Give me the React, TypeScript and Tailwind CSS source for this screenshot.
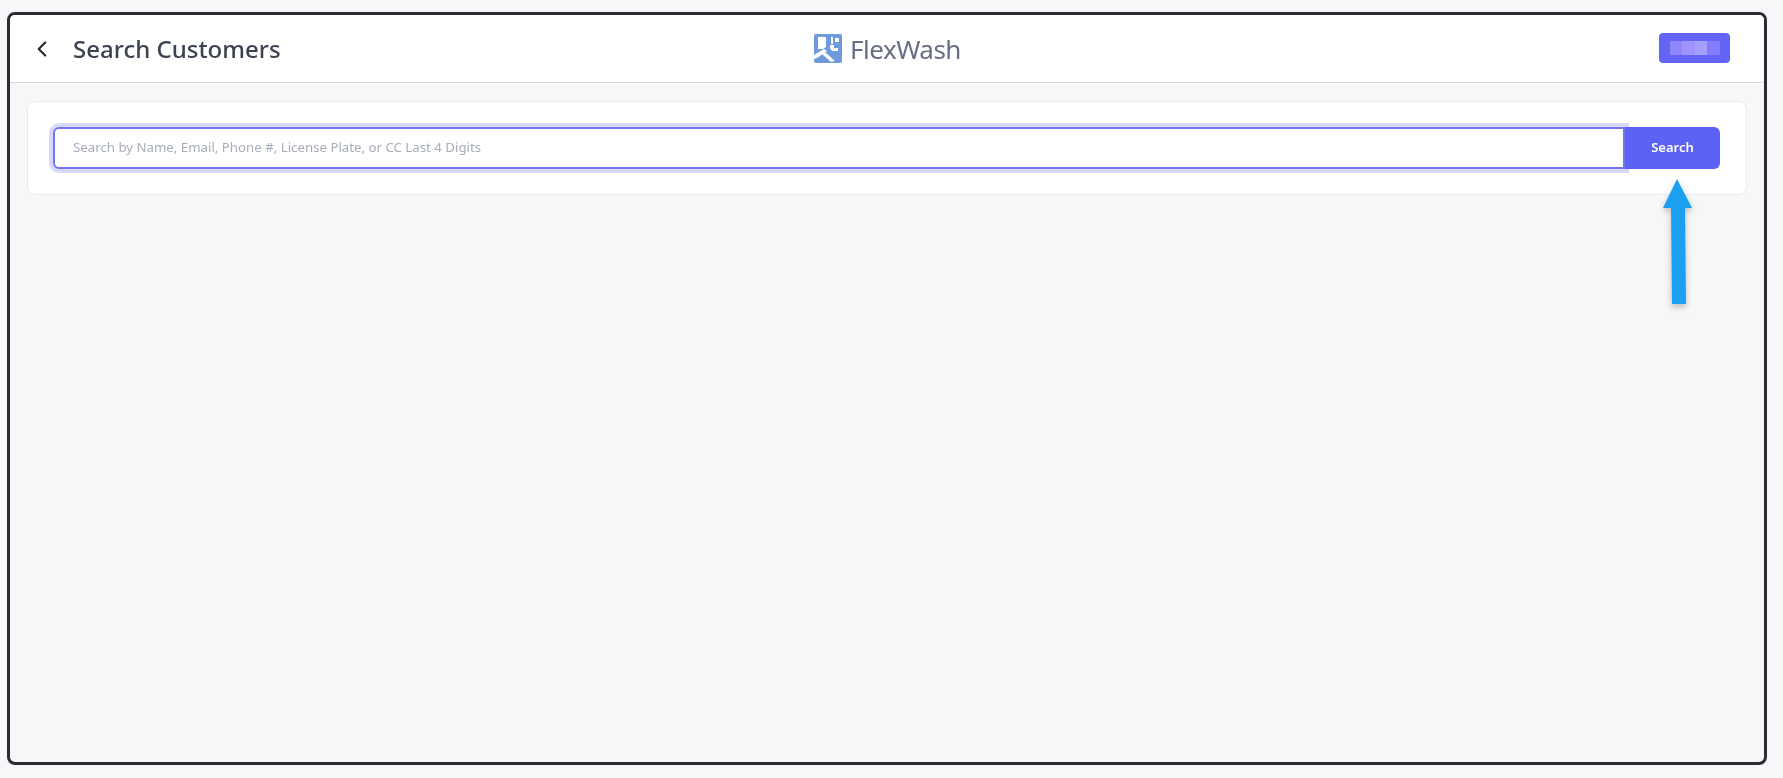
import { ChevronLeft } from 'lucide-react'

function Logo() {
    return (
        <svg width="28" height="29" viewBox="0 0 28 29" className="shrink-0">
            <rect width="28" height="29" rx="2" fill="#6f9bdc" />
            <path d="M4 3h8v10l-3 2H4z M17 3h2v7h-2z M21 4h4v4h-4z" fill="#fff" />
            <path d="M0 21 L10 15 L13 17 L3 24 L0 25z" fill="#fff" />
            <path d="M11 18 L21 27 L17 28 L8 20z" fill="#fff" />
            <path d="M16 11h4v3h4v3h-6l-2-3z" fill="#fff" />
        </svg>
    )
}

function BlurredName() {
    const cols = ['bg-[#8f84fb]', 'bg-[#9c93fc]', 'bg-[#a3a0fd]', 'bg-[#827cf9]']
    return (
        <div className="flex h-[14px] w-[50px] overflow-hidden blur-[0.5px]">
            {cols.map((c, i) => (
                <div key={i} className={`flex-1 ${c}`} />
            ))}
        </div>
    )
}

export default function App() {
    return (
        <div className="relative h-[778px] w-[1783px] bg-[#f6f7f9] pt-[12px] pl-[7px] font-['Noto_Sans','Open_Sans',sans-serif] blur-[0.35px]">
            <div className="flex h-[753px] w-[1760px] flex-col overflow-hidden rounded-[8px] border-[3px] border-[#2a2c31] bg-[#f6f7f9]">
                <header className="flex h-[68px] shrink-0 items-center justify-between border-b border-[#d6d8dc] bg-white pl-[19px] pr-[34px]">
                    <div className="flex w-[600px] items-center gap-[18px]">
                        <ChevronLeft className="h-[26px] w-[26px] text-[#26282d]" strokeWidth={2} />
                        <h1 className="text-[24px] font-medium leading-none text-[#3d4250]">Search Customers</h1>
                    </div>
                    <div className="ml-[16px] flex items-center gap-[8px]">
                        <Logo />
                        <span className="text-[26px] leading-none tracking-[-0.5px] text-[#686f82]">FlexWash</span>
                    </div>
                    <div className="flex w-[600px] justify-end">
                        <div className="mb-[2px] flex h-[30px] w-[71px] items-center justify-center rounded-[4px] bg-[#6366f5]">
                            <BlurredName />
                        </div>
                    </div>
                </header>
                <main className="flex-1 px-[17px] pt-[18px]">
                    <div className="flex h-[94px] items-center rounded-[8px] border border-[#e9ebee] bg-white pl-[25px] pr-[26px]">
                        <div className="flex h-[42px] w-full items-stretch">
                            <div className="flex flex-1 items-center rounded-l-[6px] border-2 border-[#7375f0] bg-white pl-[18px] shadow-[0_0_0_4px_#d9daf9] [clip-path:inset(-5px_-6px_-5px_-5px)]">
                                <input
                                    readOnly
                                    placeholder="Search by Name, Email, Phone #, License Plate, or CC Last 4 Digits"
                                    className="w-full bg-transparent text-[13.25px] text-[#3d4250] outline-none placeholder:text-[#a9adbb]"
                                />
                            </div>
                            <button className="relative w-[95px] rounded-r-[6px] bg-[#5c62f5] text-[13px] font-semibold text-white">
                                Search
                            </button>
                        </div>
                    </div>
                </main>
            </div>
            {/* flecha de anotación */}
            <svg width="40" height="136" viewBox="0 0 40 136" className="absolute left-[1657px] top-[177px] drop-shadow-[0_3px_3px_rgba(0,0,0,0.25)]">
                <path d="M20 2 L35 31 L28 31 L29 127 L15 127 L14 31 L6 31 Z" fill="#1b9ff0" />
            </svg>
        </div>
    )
}
